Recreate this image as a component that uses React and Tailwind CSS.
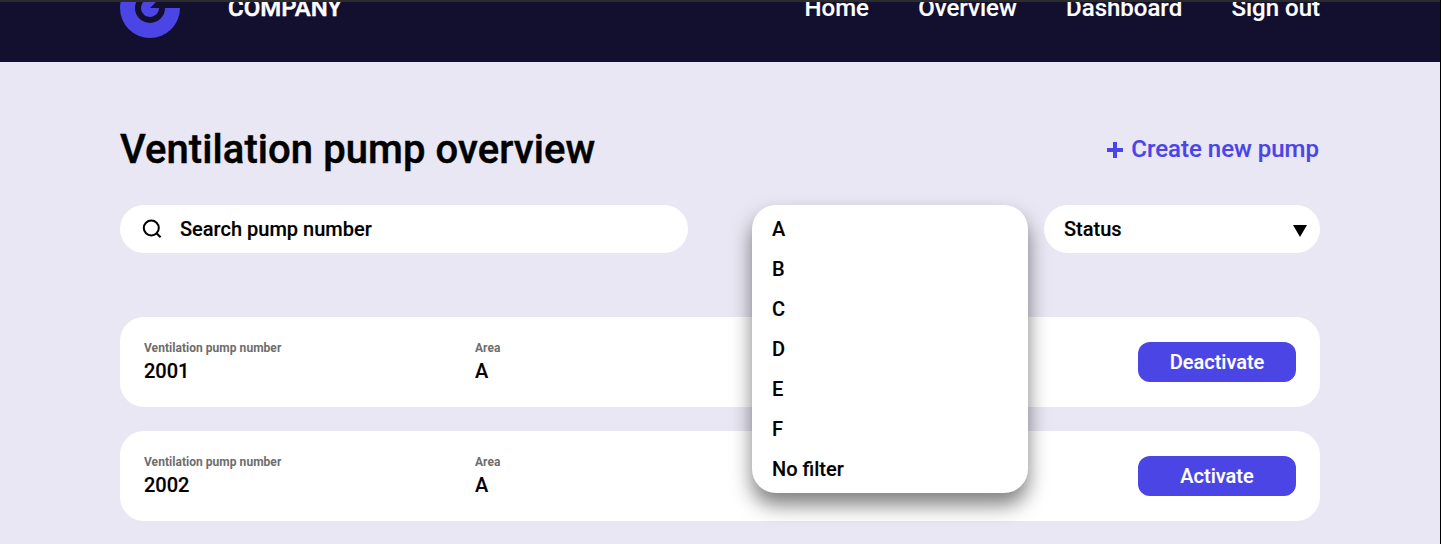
const areas = ["A", "B", "C", "D", "E", "F", "No filter"];
const pumps = [
  { number: "2001", area: "A", action: "Deactivate" },
  { number: "2002", area: "A", action: "Activate" },
];

function Logo() {
  return (
    <svg className="h-[60px] w-[60px]" viewBox="0 0 60 60">
      <path d="M60 30A30 30 0 1 1 30 0V15A15 15 0 1 0 45 30Z" fill="#4b45e6" />
      <path d="M39 30A9 9 0 1 1 36.4 23.6L30 30Z" fill="#4b45e6" />
    </svg>
  );
}

function Header() {
  return (
    <header className="h-[62px] overflow-hidden border-t-2 border-[#2c2c2c] bg-[#130f2f] text-white">
      <div className="-mt-[24px] flex h-[60px] items-center pr-[120px] pl-[120px] text-[24px] font-medium">
        <Logo />
        <span className="ml-12 [-webkit-text-stroke:0.5px_currentColor]">COMPANY</span>
        <nav className="ml-auto flex gap-[49.3px]">
          <a>Home</a>
          <a>Overview</a>
          <a>Dashboard</a>
          <a>Sign out</a>
        </nav>
      </div>
    </header>
  );
}

function Field({ label, value }) {
  return (
    <div>
      <div className="text-[12px] leading-[14px] font-bold tracking-[0.04px] text-[#6d6d6d] [-webkit-text-stroke:0]">{label}</div>
      <div className="mt-1 text-[20px] leading-6 font-medium">{value}</div>
    </div>
  );
}

function PumpCard({ pump }) {
  return (
    <article className="flex h-[90px] items-center rounded-3xl bg-white px-6">
      <div className="w-[331px]">
        <Field label="Ventilation pump number" value={pump.number} />
      </div>
      <Field label="Area" value={pump.area} />
      <button className="ml-auto h-10 w-[158px] rounded-xl bg-[#4b45e6] text-[20px] font-medium text-white">{pump.action}</button>
    </article>
  );
}

export default function App() {
  return (
    <div className="h-[544px] overflow-hidden border-r border-black bg-[#e9e7f3] font-['Roboto',sans-serif] text-black [-webkit-text-stroke:0.15px_currentColor]">
      <Header />
      <main className="pr-[120px] pl-[120px] pt-[64px]">
        <div className="flex h-12 items-center justify-between">
          <h1 className="text-[40px] font-medium tracking-[0.07px] [-webkit-text-stroke:0.45px_currentColor]">Ventilation pump overview</h1>
          <button className="mr-px mb-0.5 flex items-center gap-2 text-[24px] font-medium text-[#4b45e6]">
            <svg className="mt-px h-4 w-4" viewBox="0 0 16 16"><path d="M8 0V16M0 8H16" stroke="currentColor" strokeWidth="4" /></svg>
            Create new pump
          </button>
        </div>
        <div className="mt-[31px] flex text-[20px] font-medium">
          <div className="flex h-12 w-[568px] items-center rounded-3xl bg-white pl-[22px]">
            <svg className="mr-[18px] h-5 w-5" viewBox="0 0 20 20" fill="none" stroke="currentColor" strokeWidth="2"><circle cx="9.3" cy="9" r="7.5" /><path d="M14.5 14.2L18.6 18.3" /></svg>
            Search pump number
          </div>
          <div className="relative ml-16 h-12 w-[276px]">
            <ul className="absolute top-0 left-0 z-10 h-[288px] w-[276px] rounded-3xl bg-white pt-1 pl-5 shadow-[0_12px_20px_rgba(0,0,0,0.5)]">
              {areas.map((area) => <li key={area} className="flex h-10 items-center">{area}</li>)}
            </ul>
          </div>
          <div className="ml-4 flex h-12 w-[276px] items-center justify-between rounded-3xl bg-white pr-[13px] pl-5">
            Status
            <svg className="mt-[3px] h-3 w-[14px]" viewBox="0 0 14 12"><path d="M0 0H14L7 12Z" /></svg>
          </div>
        </div>
        <div className="mt-16 flex flex-col gap-6">
          {pumps.map((pump) => <PumpCard key={pump.number} pump={pump} />)}
        </div>
      </main>
    </div>
  );
}
